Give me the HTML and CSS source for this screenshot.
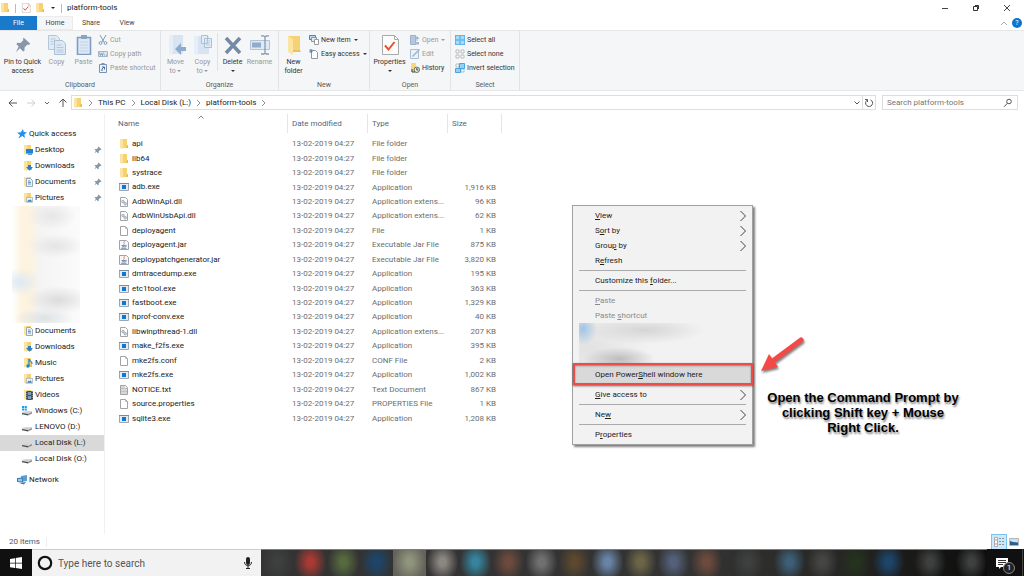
FILE: index.html
```
<!DOCTYPE html>
<html lang="en">
<head>
  <meta charset="UTF-8">
  <title>platform-tools</title>
  <link rel="stylesheet" href="styles.css">
</head>
<body>
<svg class="sprite" aria-hidden="true">
  <symbol id="folder" viewBox="0 0 10 10"><path d="M1 0h7v9H1z" fill="#f6d271"/><path d="M1 0h3v10L1 9z" fill="#fbe3a0"/><path d="M8 6h1v3H7z" fill="#e8bd55"/></symbol>
  <symbol id="exe" viewBox="0 0 10 10"><path d="M.5 1.500h9v7h-9z" fill="#e6ebef" stroke="#9ba6b1"/><path d="M0 1h10v1H0z" fill="#7d8a98"/><path d="M3 3h4v4H3z" fill="#0c77d4"/></symbol>
  <symbol id="file" viewBox="0 0 10 10"><path d="M1.500.5h5l2 2v7h-7z" fill="#fff" stroke="#a3a3a3"/><path d="M6.500.5v2h2" fill="none" stroke="#bbb"/></symbol>
  <symbol id="dll" viewBox="0 0 10 10"><path d="M1.500.5h5l2 2v7h-7z" fill="#fff" stroke="#a3a3a3"/><circle cx="4" cy="4.500" r="1.300" fill="#cfd8e0" stroke="#8c9aa6" stroke-width=".7"/><circle cx="6.200" cy="6.700" r="1.300" fill="#cfd8e0" stroke="#8c9aa6" stroke-width=".7"/></symbol>
  <symbol id="txt" viewBox="0 0 10 10"><path d="M1.500.5h5l2 2v7h-7z" fill="#eee" stroke="#a3a3a3"/><path d="M2 2h4M2 3.500h6M2 5h6M2 6.500h6M2 8h6" stroke="#b5b5b5" stroke-width=".8"/></symbol>
  <symbol id="jar" viewBox="0 0 10 10"><path d="M.5.5h7l2 2v7h-9z" fill="#f5f7fa" stroke="#9aa5b1"/><path d="M5.500 1.200c-2 1.500 1 2 -.8 3.500" stroke="#e8743a" stroke-width=".9" fill="none"/><path d="M2.500 5.500h4M3 6.800h3.300M2 8.300h5.500M6.500 5.300c1.500 0 1 1.300 0 1.300" stroke="#54779c" stroke-width=".8" fill="none"/></symbol>
  <symbol id="star" viewBox="0 0 10 10"><path d="M6 0l.8 3L10 3.500 7.300 5.400 8 9 5.200 7 1.500 9.500 3 6 0 3.800l3.800-.5z" fill="#2493e8"/></symbol>
  <symbol id="pin" viewBox="0 0 10 10"><path d="M5.500.5l4 3.700-1 .8-.8-.3-1.800 2 .1 1.800-.9.6-2-2L.5 9.500 2.300 6 .8 4.300l.8-.7 1.900.1 1.800-1.800-.4-.8z" fill="#8797a7"/></symbol>
  <symbol id="desktop" viewBox="0 0 10 10"><use href="#folder"/><path d="M3 4h7v4.500H3z" fill="#1b84d8"/><path d="M5 9.500h4" stroke="#5b9bd5"/></symbol>
  <symbol id="downloads" viewBox="0 0 10 10"><use href="#folder"/><path d="M5 4h3v2h2L6.500 9.800 3 6h2z" fill="#2b7fc9"/></symbol>
  <symbol id="documents" viewBox="0 0 10 10"><use href="#folder"/><path d="M3.500 1.500h4l2 2v6h-6z" fill="#eef3f8" stroke="#8796a5" stroke-width=".8"/><path d="M5 4h2.500M5 5.500h3M5 7h3" stroke="#4784bd" stroke-width=".8"/></symbol>
  <symbol id="pictures" viewBox="0 0 10 10"><use href="#folder"/><path d="M3.400 4.400h6.200v4.800H3.400z" fill="#eef5fa" stroke="#98a4af" stroke-width=".7"/><path d="M4 8.700l1.800-2.200 1 .8 1-1L9 8.700z" fill="#3f83bb"/></symbol>
  <symbol id="music" viewBox="0 0 10 10"><use href="#folder"/><path d="M6 1c0 2 3.500 2 3 5" fill="none" stroke="#1585dc" stroke-width="1.200"/><path d="M6 1v7" stroke="#1585dc" stroke-width="1.200"/><circle cx="5" cy="8" r="1.700" fill="#1585dc"/></symbol>
  <symbol id="videos" viewBox="0 0 10 10"><use href="#folder"/><path d="M3 1h7v9H3z" fill="#44494e"/><path d="M5 2h3v3H5zM5 6h3v3H5z" fill="#7fa0bd"/><path d="M3.800 1v9M9.200 1v9" stroke="#ddd" stroke-width=".7" stroke-dasharray="1 1"/></symbol>
  <symbol id="drive" viewBox="0 0 10 10"><path d="M0 6l4-1h6v2L6 9 0 8z" fill="#d4d4d4"/><path d="M0 7l6 1v1.500L0 8.300z" fill="#505050"/><path d="M6 8l4-2v1.500L6 9.500z" fill="#8b8b8b"/></symbol>
  <symbol id="windrive" viewBox="0 0 10 10"><use href="#drive"/><path d="M0 0h2v2H0zM2.600 0h2.200v2H2.600zM0 2.600h2v2H0zM2.600 2.600h2.200v2H2.600z" fill="#12a0e8"/></symbol>
  <symbol id="network" viewBox="0 0 10 10"><path d="M4 1l6-1v6L4 7z" fill="#5a9fd2"/><path d="M0 3l6-.5v5L0 7z" fill="#3a80b8"/><path d="M1 4l4-.3v2.800L1 6.200z" fill="#8cc8f0"/><path d="M2 8l5 1.500L9 7z" fill="#55799a"/></symbol>
  <symbol id="check" viewBox="0 0 20 20"><path d="M2.500.5h12l4 4v15h-16z" fill="#fdfdfd" stroke="#aaa"/><path d="M14.500.5v4h4" fill="none" stroke="#aaa"/><path d="M5 10.500l3.500 4 6-7.500" fill="none" stroke="#e8502a" stroke-width="2"/></symbol>
  <symbol id="copy" viewBox="0 0 20 20"><path d="M1.500.5h8l3 3v11h-11z" fill="#e0ebf6" stroke="#b3c6da"/><path d="M7.500 5.500h8l3 3v11h-11z" fill="#dce8f4" stroke="#a9bfd5"/><path d="M3.500 4h5M3.500 6.500h3M3.500 9h3M9.500 10h5M9.500 12.500h7M9.500 15h7M9.500 17h7" stroke="#b3c8dd"/></symbol>
  <symbol id="paste" viewBox="0 0 20 20"><path d="M3.500 2.500h13v17h-13z" fill="#dce8f5" stroke="#7f9dc2" stroke-width="1.600"/><path d="M7 0h6v4H7z" fill="#8aa4c3"/><path d="M6 7h8M6 10h8M6 13h8M6 16h8" stroke="#c3d3e4"/></symbol>
  <symbol id="moveto" viewBox="0 0 20 20"><path d="M3 0h14v19H3z" fill="#d8e4f1"/><path d="M3 0h4v20l-4-1z" fill="#e6eff8"/><path d="M9 14l6-6v4h5v4h-5v4z" fill="#8fabcb"/></symbol>
  <symbol id="copyto" viewBox="0 0 20 20"><path d="M1 1h15v18H1z" fill="#d8e4f1"/><path d="M1 1h4v19l-4-1z" fill="#e6eff8"/><path d="M8.500.5h6v8h-6zM11.500 3.500h7v9h-7z" fill="#e4edf6" stroke="#a9bfd5"/><path d="M13 6h4M13 8h4M13 10h4" stroke="#b9cce0"/></symbol>
  <symbol id="delete" viewBox="0 0 20 20"><path d="M3 3l14 15M17 3L3 18" stroke="#7489a5" stroke-width="3.500"/></symbol>
  <symbol id="rename" viewBox="0 0 20 20"><path d="M.5 5.500h19v9H.5z" fill="#e0eaf5" stroke="#b0c3d9"/><path d="M2 7.500h9v5H2z" fill="#91abc9"/><path d="M11 .8h3M16 .8h3M15 2v16M11 19h3M16 19h3M14 1l1 1 1-1M14 19l1-1 1 1" stroke="#8799b0" fill="none" stroke-width="1.300"/></symbol>
  <symbol id="newfolder" viewBox="0 0 20 20"><path d="M4 1h12v16H4z" fill="#f6d272"/><path d="M4 1l5 3v16l-5-3z" fill="#fbe4a4"/><path d="M16 15l1 2H9v-2z" fill="#e9c267"/></symbol>
  <symbol id="cut" viewBox="0 0 10 10"><path d="M2 0l4 7M8 0L4 7" stroke="#8499b2" fill="none"/><circle cx="2.500" cy="8" r="1.400" fill="none" stroke="#7f9bbb"/><circle cx="7.500" cy="8" r="1.400" fill="none" stroke="#7f9bbb"/></symbol>
  <symbol id="path" viewBox="0 0 10 10"><path d="M.5 2.500h9v5h-9z" fill="#dbe5f0" stroke="#a3b5ca"/><path d="M1.500 3.500l1 3 1-2 1 2 .8-3M6 6h1M8 6h1" fill="none" stroke="#768caa" stroke-width=".8"/></symbol>
  <symbol id="shortcut" viewBox="0 0 10 10"><path d="M1.500 1.500h7v8h-7z" fill="#eaf1fa" stroke="#7893b5"/><path d="M3.500 0h3v2h-3z" fill="#7893b5"/><path d="M4 8V6l2-2M4 4h2.500v2.500" fill="none" stroke="#526f97"/></symbol>
  <symbol id="newitem" viewBox="0 0 10 10"><path d="M.5.5h6v4h-6z" fill="#bfdcf4" stroke="#637b93"/><path d="M2.500 2.500h5v4h-5z" fill="#e1edf8" stroke="#8195a9"/><path d="M5.500 4.500h4v5h-4z" fill="#fff" stroke="#9a9a9a"/></symbol>
  <symbol id="easy" viewBox="0 0 10 10"><path d="M2.500 1.500h4l2 2v6h-6z" fill="#fff" stroke="#8d98a3"/><path d="M0 2h4M1 0l2 4M3 0L1 4" stroke="#5b7e9e" stroke-width=".8"/></symbol>
  <symbol id="open" viewBox="0 0 10 10"><path d="M.5.5h5v9h-5z" fill="#b6c7dc" stroke="#9bb0ca"/><path d="M5 7h4v2.500H5zM7 1l2.500 3h-5zM6.500 4h1v2h-1z" fill="#a3b6ce"/></symbol>
  <symbol id="edit" viewBox="0 0 10 10"><path d="M.5.5h8v9h-8z" fill="#eaf1f8" stroke="#a9bdd4"/><path d="M2.500 7.500l7-7" stroke="#9bb4d2" stroke-width="1.500"/></symbol>
  <symbol id="history" viewBox="0 0 10 10"><path d="M1 0h5v9H1z" fill="#f7d680"/><circle cx="6.800" cy="6.800" r="2.700" fill="#e7ebdc" stroke="#65705a"/><path d="M6.800 5v2h1.500M2 6v3h3" stroke="#354b43" fill="none"/></symbol>
  <symbol id="selall" viewBox="0 0 10 10"><path d="M0 0h10v10H0z" fill="#62b5ec"/><path d="M1 1h3.300v3.300H1zM5.700 1H9v3.300H5.700zM1 5.700h3.300V9H1zM5.700 5.700H9V9H5.700z" fill="#a7daf9"/></symbol>
  <symbol id="selnone" viewBox="0 0 10 10"><path d="M1 1h3v3H1zM6 1h3v3H6zM1 6h3v3H1zM6 6h3v3H6z" fill="#fff" stroke="#b3b3b3" stroke-width=".9"/></symbol>
  <symbol id="selinv" viewBox="0 0 10 10"><path d="M1 1h3v3H1zM6 6h3v3H6z" fill="#fff" stroke="#aeb6bc" stroke-width=".9"/><path d="M4.500.5h5v5h-5zM.5 5.500h5v4h-5z" fill="#91d0f7" stroke="#4aa3e0"/></symbol>
  <symbol id="chev" viewBox="0 0 8 10"><path d="M1.500 0l5 5-5 5" fill="none" stroke="#444" stroke-width="1"/></symbol>
</svg>

<header class="titlebar">
  <svg class="icon"><use href="#folder"/></svg>
  <i class="bar"></i>
  <svg class="icon"><use href="#check"/></svg>
  <svg class="icon quick-folder"><use href="#folder"/></svg>
  <i class="drop"></i>
  <i class="bar"></i>
  <h1 class="title">platform-tools</h1>
  <div class="window-buttons">
    <button aria-label="Minimize"><svg width="8" height="8"><path d="M1 4.500h6" stroke="#444"/></svg></button>
    <button aria-label="Restore"><svg width="8" height="8"><path d="M1.500 2.500h4v4h-4zM3 1.500h3.500V5" fill="none" stroke="#333"/></svg></button>
    <button aria-label="Close"><svg width="8" height="8"><path d="M1 1l6 6M7 1L1 7" stroke="#444"/></svg></button>
  </div>
</header>

<nav class="tabs">
  <button class="tab tab-file">File</button>
  <button class="tab tab-active">Home</button>
  <button class="tab">Share</button>
  <button class="tab">View</button>
  <span class="tabs-end">
    <svg width="8" height="8"><path d="M1 6l3-3 3 3" fill="none" stroke="#aaa"/></svg>
    <button class="help">?</button>
  </span>
</nav>

<section class="ribbon">
  <div class="group group-clipboard">
    <div class="group-body">
      <button class="big big-pin"><svg><use href="#pin"/></svg>Pin to Quick access</button>
      <button class="big off"><svg><use href="#copy"/></svg>Copy</button>
      <button class="big off"><svg><use href="#paste"/></svg>Paste</button>
      <div class="stack off">
        <button class="small"><svg class="icon"><use href="#cut"/></svg>Cut</button>
        <button class="small"><svg class="icon"><use href="#path"/></svg>Copy path</button>
        <button class="small"><svg class="icon"><use href="#shortcut"/></svg>Paste shortcut</button>
      </div>
    </div>
    <h2 class="group-name">Clipboard</h2>
  </div>
  <div class="group group-organize">
    <div class="group-body">
      <button class="big off"><svg><use href="#moveto"/></svg>Move<span>to <i class="drop"></i></span></button>
      <button class="big off"><svg><use href="#copyto"/></svg>Copy<span>to <i class="drop"></i></span></button>
      <i class="divider"></i>
      <button class="big"><svg><use href="#delete"/></svg>Delete<span><i class="drop"></i></span></button>
      <button class="big off"><svg><use href="#rename"/></svg>Rename</button>
    </div>
    <h2 class="group-name">Organize</h2>
  </div>
  <div class="group group-new">
    <div class="group-body">
      <button class="big"><svg><use href="#newfolder"/></svg>New<span>folder</span></button>
      <div class="stack">
        <button class="small"><svg class="icon"><use href="#newitem"/></svg>New item<i class="drop"></i></button>
        <button class="small"><svg class="icon"><use href="#easy"/></svg>Easy access<i class="drop"></i></button>
      </div>
    </div>
    <h2 class="group-name">New</h2>
  </div>
  <div class="group group-open">
    <div class="group-body">
      <button class="big"><svg><use href="#check"/></svg>Properties<span><i class="drop"></i></span></button>
      <div class="stack">
        <button class="small off"><svg class="icon"><use href="#open"/></svg>Open<i class="drop"></i></button>
        <button class="small off"><svg class="icon"><use href="#edit"/></svg>Edit</button>
        <button class="small"><svg class="icon"><use href="#history"/></svg>History</button>
      </div>
    </div>
    <h2 class="group-name">Open</h2>
  </div>
  <div class="group group-select">
    <div class="group-body">
      <div class="stack">
        <button class="small"><svg class="icon"><use href="#selall"/></svg>Select all</button>
        <button class="small"><svg class="icon"><use href="#selnone"/></svg>Select none</button>
        <button class="small"><svg class="icon"><use href="#selinv"/></svg>Invert selection</button>
      </div>
    </div>
    <h2 class="group-name">Select</h2>
  </div>
</section>

<div class="address">
  <div class="history-buttons">
    <button aria-label="Back"><svg width="10" height="10"><path d="M1 5h8M4.500 1.500L1 5l3.500 3.500" fill="none" stroke="#555"/></svg></button>
    <button aria-label="Forward"><svg width="10" height="10"><path d="M1 5h8M5.500 1.500L9 5 5.500 8.500" fill="none" stroke="#ccc"/></svg></button>
    <button aria-label="Recent"><svg width="6" height="10"><path d="M1 4l2 2 2-2" fill="none" stroke="#666"/></svg></button>
    <button aria-label="Up"><svg width="10" height="10"><path d="M5 9V1M1.500 4.500L5 1l3.500 3.500" fill="none" stroke="#555"/></svg></button>
  </div>
  <div class="crumbs">
    <svg class="icon"><use href="#folder"/></svg>
    <svg class="sep"><use href="#chev"/></svg>
    <a href="#">This PC</a>
    <svg class="sep"><use href="#chev"/></svg>
    <a href="#">Local Disk (L:)</a>
    <svg class="sep"><use href="#chev"/></svg>
    <a href="#">platform-tools</a>
    <svg class="sep"><use href="#chev"/></svg>
    <button class="crumbs-drop" aria-label="Previous locations"><svg width="8" height="8"><path d="M1.500 2.500L4 5l2.500-2.500" fill="none" stroke="#555"/></svg></button>
    <button class="refresh" aria-label="Refresh"><svg width="10" height="10"><path d="M6.500 1.800a3.500 3.500 0 1 1-3.500 .4M1 1.500h2.500V4" fill="none" stroke="#555"/></svg></button>
  </div>
  <label class="search">
    <input type="search" placeholder="Search platform-tools" aria-label="Search platform-tools">
    <svg width="10" height="10"><circle cx="6" cy="3.500" r="2.300" fill="none" stroke="#555"/><path d="M4.500 5.200L1 8.800" stroke="#555"/></svg>
  </label>
</div>

<main class="main">
  <nav class="tree">
    <a class="node node-root" href="#"><svg class="icon"><use href="#star"/></svg>Quick access</a>
    <a class="node" href="#"><svg class="icon"><use href="#desktop"/></svg>Desktop<svg class="pin"><use href="#pin"/></svg></a>
    <a class="node" href="#"><svg class="icon"><use href="#downloads"/></svg>Downloads<svg class="pin"><use href="#pin"/></svg></a>
    <a class="node" href="#"><svg class="icon"><use href="#documents"/></svg>Documents<svg class="pin"><use href="#pin"/></svg></a>
    <a class="node" href="#"><svg class="icon"><use href="#pictures"/></svg>Pictures<svg class="pin"><use href="#pin"/></svg></a>
    <div class="tree-blur"></div>
    <a class="node" href="#"><svg class="icon"><use href="#documents"/></svg>Documents</a>
    <a class="node" href="#"><svg class="icon"><use href="#downloads"/></svg>Downloads</a>
    <a class="node" href="#"><svg class="icon"><use href="#music"/></svg>Music</a>
    <a class="node" href="#"><svg class="icon"><use href="#pictures"/></svg>Pictures</a>
    <a class="node" href="#"><svg class="icon"><use href="#videos"/></svg>Videos</a>
    <a class="node node-drive" href="#"><svg class="icon"><use href="#windrive"/></svg>Windows (C:)</a>
    <a class="node node-drive" href="#"><svg class="icon"><use href="#drive"/></svg>LENOVO (D:)</a>
    <a class="node node-drive node-selected" href="#"><svg class="icon"><use href="#drive"/></svg>Local Disk (L:)</a>
    <a class="node node-drive" href="#"><svg class="icon"><use href="#drive"/></svg>Local Disk (O:)</a>
    <a class="node node-root node-network" href="#"><svg class="icon"><use href="#network"/></svg>Network</a>
  </nav>

  <div class="content">
    <table class="files">
      <colgroup><col class="col-name"><col class="col-date"><col class="col-type"><col class="col-size"></colgroup>
      <thead>
        <tr><th class="sorted">Name<svg class="sort" width="6" height="4"><path d="M.5 3.500L3 1l2.500 2.500" fill="none" stroke="#888"/></svg></th><th>Date modified</th><th>Type</th><th>Size</th></tr>
      </thead>
      <tbody>
        <tr><td><svg class="icon"><use href="#folder"/></svg>api</td><td>13-02-2019 04:27</td><td>File folder</td><td></td></tr>
        <tr><td><svg class="icon"><use href="#folder"/></svg>lib64</td><td>13-02-2019 04:27</td><td>File folder</td><td></td></tr>
        <tr><td><svg class="icon"><use href="#folder"/></svg>systrace</td><td>13-02-2019 04:27</td><td>File folder</td><td></td></tr>
        <tr><td><svg class="icon"><use href="#exe"/></svg>adb.exe</td><td>13-02-2019 04:27</td><td>Application</td><td>1,916 KB</td></tr>
        <tr><td><svg class="icon"><use href="#dll"/></svg>AdbWinApi.dll</td><td>13-02-2019 04:27</td><td>Application extens...</td><td>96 KB</td></tr>
        <tr><td><svg class="icon"><use href="#dll"/></svg>AdbWinUsbApi.dll</td><td>13-02-2019 04:27</td><td>Application extens...</td><td>62 KB</td></tr>
        <tr><td><svg class="icon"><use href="#file"/></svg>deployagent</td><td>13-02-2019 04:27</td><td>File</td><td>1 KB</td></tr>
        <tr><td><svg class="icon"><use href="#jar"/></svg>deployagent.jar</td><td>13-02-2019 04:27</td><td>Executable Jar File</td><td>875 KB</td></tr>
        <tr><td><svg class="icon"><use href="#jar"/></svg>deploypatchgenerator.jar</td><td>13-02-2019 04:27</td><td>Executable Jar File</td><td>3,820 KB</td></tr>
        <tr><td><svg class="icon"><use href="#exe"/></svg>dmtracedump.exe</td><td>13-02-2019 04:27</td><td>Application</td><td>195 KB</td></tr>
        <tr><td><svg class="icon"><use href="#exe"/></svg>etc1tool.exe</td><td>13-02-2019 04:27</td><td>Application</td><td>363 KB</td></tr>
        <tr><td><svg class="icon"><use href="#exe"/></svg>fastboot.exe</td><td>13-02-2019 04:27</td><td>Application</td><td>1,329 KB</td></tr>
        <tr><td><svg class="icon"><use href="#exe"/></svg>hprof-conv.exe</td><td>13-02-2019 04:27</td><td>Application</td><td>40 KB</td></tr>
        <tr><td><svg class="icon"><use href="#dll"/></svg>libwinpthread-1.dll</td><td>13-02-2019 04:27</td><td>Application extens...</td><td>207 KB</td></tr>
        <tr><td><svg class="icon"><use href="#exe"/></svg>make_f2fs.exe</td><td>13-02-2019 04:27</td><td>Application</td><td>395 KB</td></tr>
        <tr><td><svg class="icon"><use href="#file"/></svg>mke2fs.conf</td><td>13-02-2019 04:27</td><td>CONF File</td><td>2 KB</td></tr>
        <tr><td><svg class="icon"><use href="#exe"/></svg>mke2fs.exe</td><td>13-02-2019 04:27</td><td>Application</td><td>1,002 KB</td></tr>
        <tr><td><svg class="icon"><use href="#txt"/></svg>NOTICE.txt</td><td>13-02-2019 04:27</td><td>Text Document</td><td>867 KB</td></tr>
        <tr><td><svg class="icon"><use href="#file"/></svg>source.properties</td><td>13-02-2019 04:27</td><td>PROPERTIES File</td><td>1 KB</td></tr>
        <tr><td><svg class="icon"><use href="#exe"/></svg>sqlite3.exe</td><td>13-02-2019 04:27</td><td>Application</td><td>1,208 KB</td></tr>
      </tbody>
    </table>
  </div>
</main>

<footer class="status">
  <span class="status-count">20 items</span>
  <button class="view view-active" aria-label="Details"><svg width="12" height="12"><path d="M1.500 1.500h3v9h-3z" fill="#fff" stroke="#aab"/><path d="M2 4h2M2 8h2" stroke="#d88a55"/><path d="M6 2.500h2M9 2.500h2M6 5.500h2M9 5.500h2M6 8.500h2M9 8.500h2" stroke="#8397a5"/></svg></button>
  <button class="view" aria-label="Large icons"><svg width="10" height="8"><path d="M.5.5h9v7h-9z" fill="#c9e2f5" stroke="#b5b5b5"/><path d="M1 3l3 1 5 .5V7H1z" fill="#2b5f8c"/></svg></button>
</footer>

<div class="taskbar">
  <button class="start" aria-label="Start"><svg width="12" height="12"><path d="M0 2l5-.8v4.500H0zM5.700 1.100L12 0v5.700H5.700zM0 6.400h5v4.500L0 10.200zM5.700 6.400H12V12l-6.300-.9z" fill="#fff"/></svg></button>
  <label class="cortana">
    <svg width="16" height="16"><circle cx="8" cy="8" r="6.200" fill="none" stroke="#111" stroke-width="2.200"/></svg>
    <input type="text" placeholder="Type here to search" aria-label="Type here to search">
    <svg width="10" height="14"><rect x="3" y="1" width="4" height="8" rx="2" fill="#222"/><path d="M1.500 6c0 5 7 5 7 0M5 10v3M3 12.500h4" fill="none" stroke="#222"/></svg>
  </label>
  <div class="apps">
    <i class="app"></i>
    <i class="app app-red"></i>
    <i class="app app-green"></i>
    <i class="app app-navy"></i>
    <i class="app app-current"></i>
    <i class="app app-silver"></i>
    <i class="app app-cyan"></i>
    <i class="app app-rust"></i>
    <i class="app app-grey"></i>
    <i class="app app-brown"></i>
    <i class="app app-sky"></i>
    <i class="app app-olive"></i>
    <i class="app app-slate"></i>
    <i class="app app-rust"></i>
    <i class="app app-wide"></i>
    <i class="app app-steel"></i>
    <i class="app app-ash"></i>
    <i class="app app-forest"></i>
    <i class="app app-navy"></i>
    <i class="app app-wide"></i>
    <i class="app"></i>
  </div>
  <button class="notify" aria-label="Notifications"><svg width="18" height="18"><path d="M1 1h12v9H6l-2 2v-2H1z" fill="#fff"/><path d="M3 3.500h8M3 5.500h8M3 7.500h5" stroke="#333"/></svg><span class="badge">1</span></button>
</div>

<div class="menu" role="menu">
  <button class="item"><span><u>V</u>iew</span><svg><use href="#chev"/></svg></button>
  <button class="item"><span>S<u>o</u>rt by</span><svg><use href="#chev"/></svg></button>
  <button class="item"><span>Grou<u>p</u> by</span><svg><use href="#chev"/></svg></button>
  <button class="item"><span>R<u>e</u>fresh</span></button>
  <hr>
  <button class="item"><span>Customize this <u>f</u>older...</span></button>
  <hr>
  <button class="item off" disabled><span><u>P</u>aste</span></button>
  <button class="item off" disabled><span>Paste <u>s</u>hortcut</span></button>
  <div class="menu-blur"></div>
  <button class="item item-marked"><span>Open Power<u>S</u>hell window here</span></button>
  <hr>
  <button class="item"><span><u>G</u>ive access to</span><svg><use href="#chev"/></svg></button>
  <hr>
  <button class="item"><span>Ne<u>w</u></span><svg><use href="#chev"/></svg></button>
  <hr>
  <button class="item"><span>P<u>r</u>operties</span></button>
</div>

<svg class="arrow" width="50" height="42"><path d="M42 6L15 26" stroke="#f44a47" stroke-width="5" stroke-linecap="round"/><path d="M2 37l8-17 9 13z" fill="#f44a47"/></svg>
<p class="note">Open the Command Prompt by clicking Shift key + Mouse Right Click.</p>
</body>
</html>
```

FILE: styles.css
```
body {
  margin: 0;
  height: 100vh;
  display: flex;
  flex-direction: column;
  position: relative;
  overflow: hidden;
  background: #fff;
  color: #222;
  font: 8px/10px Roboto, "Open Sans", sans-serif;
}
button {
  margin: 0;
  padding: 0;
  border: 0;
  background: none;
  font: inherit;
  color: inherit;
}
a {
  color: inherit;
  text-decoration: none;
}
svg {
  display: block;
  flex: none;
}
.sprite {
  position: absolute;
  width: 0;
  height: 0;
}
.icon {
  width: 10px;
  height: 10px;
}
.drop {
  display: inline-block;
  border: 2px solid transparent;
  border-top-color: currentColor;
  border-bottom: 0;
  vertical-align: middle;
}

/* title bar */
.titlebar {
  flex: none;
  height: 16px;
  display: flex;
  align-items: center;
  gap: 4px;
}
.bar {
  width: 1px;
  height: 9px;
  margin: 0 1px;
  background: #bbb;
}
.titlebar .drop {
  margin: 0 1px 0 2px;
}
.title {
  margin: 0;
  font-size: 8px;
  font-weight: normal;
}
.window-buttons {
  margin-left: auto;
  display: flex;
  padding-right: 2px;
}
.window-buttons button {
  width: 31px;
  display: flex;
  justify-content: center;
}

/* tabs */
.tabs {
  flex: none;
  height: 14px;
  display: flex;
  align-items: stretch;
  font-size: 7px;
}
.tab {
  width: 36px;
  color: #444;
}
.tab-file {
  width: 37px;
  background: #1979ca;
  color: #fff;
}
.tab-active {
  background: #f5f6f7;
  box-shadow: inset 0 0 0 1px #ececed;
}
.tabs-end {
  margin-left: auto;
  display: flex;
  align-items: center;
  gap: 4px;
  padding-right: 2px;
}
.help {
  width: 10px;
  height: 10px;
  border-radius: 50%;
  background: #0a75d1;
  color: #fff;
}

/* ribbon */
.ribbon {
  flex: none;
  display: flex;
  height: 61px;
  box-sizing: border-box;
  border: 1px solid #e5e6e7;
  border-width: 1px 0;
  background: #f5f6f7;
  font-size: 7px;
  line-height: 9px;
  color: #333;
}
.group {
  display: flex;
  flex-direction: column;
  justify-content: space-between;
  box-sizing: border-box;
  border-right: 1px solid #e2e3e4;
}
.group-clipboard {
  width: 161px;
}
.group-organize {
  width: 118px;
}
.group-new {
  width: 91px;
}
.group-open {
  width: 81px;
}
.group-select {
  width: 69px;
}
.group-body {
  display: flex;
  padding-top: 2px;
}
.group-name {
  margin: 0;
  font-size: 7px;
  font-weight: normal;
  line-height: 10px;
  text-align: center;
  color: #5a5a5a;
}
.big {
  width: 27px;
  padding-top: 2px;
  display: flex;
  flex-direction: column;
  align-items: center;
  white-space: nowrap;
}
.big svg {
  width: 20px;
  height: 20px;
  margin-bottom: 3px;
}
.big-pin {
  width: 43px;
  padding-left: 2px;
  box-sizing: border-box;
  white-space: normal;
}
.big-pin svg {
  width: 16px;
  height: 20px;
}
.off {
  color: #999;
}
.group-organize .group-body {
  padding-left: 1px;
}
.divider {
  width: 1px;
  height: 38px;
  margin: 0 1px;
  background: #dfe1e3;
}
.group-new .big {
  width: 29px;
}
.group-open .big {
  width: 39px;
}
.stack {
  padding-left: 1px;
}
.small {
  display: flex;
  align-items: center;
  gap: 2px;
  height: 14px;
  white-space: nowrap;
}
.small .drop {
  margin-left: 1px;
}
.group-select .stack {
  padding-left: 4px;
}

/* address bar */
.address {
  flex: none;
  height: 23px;
  display: flex;
  align-items: center;
  padding-right: 6px;
}
.history-buttons {
  width: 71px;
  display: flex;
  align-items: center;
  justify-content: space-between;
  box-sizing: border-box;
  padding: 0 3px 0 8px;
}
.crumbs {
  flex: 1;
  height: 15px;
  box-sizing: border-box;
  display: flex;
  align-items: center;
  gap: 5px;
  padding-left: 1px;
  border: 1px solid #ddd;
}
.sep {
  width: 5px;
  height: 6px;
}
.crumbs-drop {
  margin-left: auto;
}
.refresh {
  height: 13px;
  padding: 0 1px;
  display: flex;
  align-items: center;
  margin-left: -4px;
  border-left: 1px solid #ddd;
}
.search {
  width: 136px;
  height: 15px;
  box-sizing: border-box;
  margin-left: 6px;
  display: flex;
  align-items: center;
  padding: 0 4px;
  border: 1px solid #ddd;
}
input {
  flex: 1;
  min-width: 0;
  padding: 0;
  border: 0;
  outline: 0;
  background: none;
  font: inherit;
}
input::placeholder {
  color: #757575;
}

/* main area */
.main {
  flex: 1;
  min-height: 0;
  display: flex;
}
.tree {
  width: 104px;
  padding-top: 12px;
  border-right: 1px solid #f0f0f0;
}
.node {
  display: flex;
  align-items: center;
  gap: 2px;
  height: 16px;
  padding: 0 2px 0 23px;
}
.node-root {
  padding-left: 17px;
}
.node-drive {
  gap: 3px;
  padding-left: 22px;
}
.node-selected {
  background: #d9d9d9;
}
.node-network {
  margin-top: 5px;
}
.pin {
  width: 8px;
  height: 8px;
  margin-left: auto;
}
.tree-blur {
  height: 117px;
  margin: 0 24px 0 12px;
  background:
    radial-gradient(24px 14px at 40px 10px, #e6e6e6, transparent),
    radial-gradient(28px 12px at 44px 40px, #e4e4e4, transparent),
    radial-gradient(20px 14px at 8px 76px, #dce9f4, transparent),
    radial-gradient(32px 14px at 46px 94px, #dcdcdc, transparent),
    radial-gradient(30px 10px at 32px 112px, #dde2e4, transparent),
    linear-gradient(90deg, #fff, #fdf3de 10px, #fbf2e2 20px, #f4f4f4 28px, #fbfbfb);
}
.content {
  flex: 1;
  padding-left: 8px;
}
.files {
  width: 389px;
  height: 312px;
  table-layout: fixed;
  border-collapse: separate;
  border-spacing: 0;
  color: #6d6d6d;
}
.col-name {
  width: 175px;
}
.col-date {
  width: 80px;
}
.col-type {
  width: 80px;
}
.files th {
  position: relative;
  height: 19px;
  padding: 0 0 4px 4px;
  font-weight: normal;
  text-align: left;
  color: #53657c;
  background: linear-gradient(#e5e5e5, #e5e5e5) no-repeat 100% 0 / 1px 19px;
}
.files .sorted {
  padding-left: 5px;
}
.sort {
  position: absolute;
  top: 1px;
  right: 84px;
}
.files td {
  padding: 0 0 0 4px;
  white-space: nowrap;
}
.files td:first-child {
  padding-left: 6px;
  color: #222;
}
.files td:last-child {
  padding-right: 6px;
  text-align: right;
}
.files .icon {
  display: inline-block;
  margin-right: 3px;
  vertical-align: middle;
}

/* status bar */
.status {
  flex: none;
  height: 15px;
  display: flex;
  align-items: center;
  gap: 2px;
  padding: 0 5px 0 9px;
  color: #45586f;
}
.status-count {
  margin-right: auto;
  padding-right: 6px;
  border-right: 1px solid #eee;
}
.view {
  display: flex;
}
.view-active {
  padding: 1px;
  border: 1px solid #7cc4f0;
  background: #cde8f8;
}

/* taskbar */
.taskbar {
  flex: none;
  height: 27px;
  display: flex;
  background: #101010;
}
.start {
  width: 32px;
  display: flex;
  align-items: center;
  justify-content: center;
}
.cortana {
  width: 229px;
  box-sizing: border-box;
  display: flex;
  align-items: center;
  gap: 5px;
  padding: 0 8px 0 5px;
  border-top: 1px solid #ccc;
  background: #f2f2f2;
  font-size: 10px;
}
.cortana input::placeholder {
  color: #555;
}
.apps {
  flex: 1;
  display: flex;
  overflow: hidden;
  border-top: 1px solid #7d7f7c;
  background: linear-gradient(90deg, #333 60%, #262624 80%, #0c0c0c);
}
.app {
  width: 33px;
  flex: none;
  background: radial-gradient(16px 20px at 50% 12px, var(--tint, #3d403e) 20%, transparent);
}
.app-wide { width: 50px; }
.app-red { --tint: #a83a33; }
.app-green { --tint: #56693f; }
.app-navy { --tint: #1d4568; }
.app-silver { --tint: #8a8681; }
.app-cyan { --tint: #35839c; }
.app-rust { --tint: #6c4a3e; }
.app-grey { --tint: #707070; }
.app-brown { --tint: #5c482e; }
.app-sky { --tint: #6883a4; }
.app-olive { --tint: #6b6547; }
.app-slate { --tint: #536078; }
.app-steel { --tint: #3d5e76; }
.app-ash { --tint: #454543; }
.app-forest { --tint: #24331e; }
.app-current {
  --tint: #8f947c;
  background-color: #64625a;
}
.notify {
  position: relative;
  width: 36px;
  padding: 6px 0 0 8px;
  border-right: 1px solid #444;
  margin-right: 1px;
}
.badge {
  position: absolute;
  right: 7px;
  bottom: 2px;
  width: 10px;
  height: 10px;
  border: 1px solid #888;
  border-radius: 50%;
  background: #222;
  color: #fff;
}

/* context menu */
.menu {
  position: absolute;
  left: 572px;
  top: 205px;
  width: 181px;
  box-sizing: border-box;
  padding: 2px;
  border: 1px solid #a0a0a0;
  background: #f2f2f2;
  box-shadow: 2px 2px 2px rgba(0, 0, 0, .5);
}
.menu hr {
  height: 1px;
  margin: 2px 4px;
  border: 0;
  background: #ababab;
}
.item {
  display: flex;
  width: 100%;
  height: 15px;
  align-items: center;
  justify-content: space-between;
  padding: 0 3px 0 20px;
}
.item svg {
  width: 8px;
  height: 10px;
}
.item.off {
  color: #8a8a8a;
}
.menu-blur {
  height: 44px;
  margin: 0 4px;
  background:
    radial-gradient(14px 16px at 4px 6px, #9fc4e4, transparent),
    radial-gradient(60px 14px at 66px 7px, #d5d5d5, transparent),
    radial-gradient(36px 12px at 40px 36px, #bdbdbd, transparent),
    radial-gradient(60px 50px at 10px 24px, #e2e2e2, transparent);
}
.item-marked {
  position: relative;
}
.item-marked span {
  z-index: 1;
}
.item-marked::before {
  content: '';
  position: absolute;
  inset: -4px -3px -3px -2px;
  border: 2px solid #f04b48;
  background: #d9d9d9;
  box-shadow: 0 1px 2px rgba(0, 0, 0, .6), inset 0 1px 2px rgba(0, 0, 0, .4);
}

/* callout */
.arrow {
  position: absolute;
  left: 759px;
  top: 334px;
  filter: drop-shadow(1px 2px 1px rgba(0, 0, 0, .5));
}
.note {
  position: absolute;
  left: 766px;
  top: 390px;
  width: 194px;
  margin: 0;
  font: bold 13px/15px "Liberation Sans", Arial, sans-serif;
  text-align: center;
  color: #000;
  text-shadow: 1px 2px 2px rgba(0, 0, 0, .5);
}
```
